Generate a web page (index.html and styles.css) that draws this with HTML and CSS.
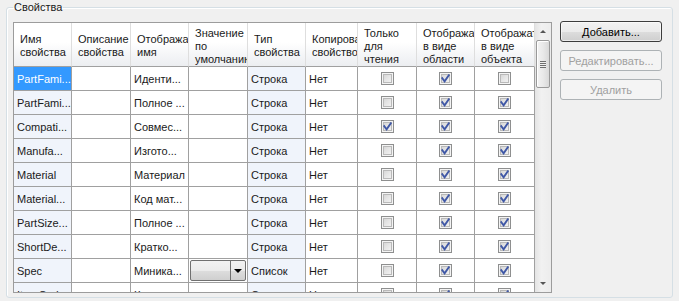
FILE: index.html
```html
<!DOCTYPE html>
<html lang="ru">
<head>
    <meta charset="UTF-8">
    <title>Свойства</title>
    <link rel="stylesheet" href="styles.css">
</head>
<body>
    <fieldset class="group">
        <legend>Свойства</legend>
        <div class="group-body">
            <div class="grid">
                <div class="grid-view">
                    <table class="props">
                        <colgroup>
                            <col style="width:58px">
                            <col style="width:59px">
                            <col style="width:58px">
                            <col style="width:59px">
                            <col style="width:58px">
                            <col style="width:52px">
                            <col style="width:59px">
                            <col style="width:58px">
                            <col style="width:60px">
                        </colgroup>
                        <thead>
                            <tr>
                                <th>Имя свойства</th>
                                <th>Описание свойства</th>
                                <th>Отображаемое имя</th>
                                <th>Значение по умолчанию</th>
                                <th>Тип свойства</th>
                                <th>Копировать свойство</th>
                                <th>Только для чтения</th>
                                <th>Отображать в виде области</th>
                                <th>Отображать в виде объекта</th>
                            </tr>
                        </thead>
                        <tbody>
                            <tr>
                                <td class="name sel">PartFami...</td>
                                <td></td>
                                <td>Иденти...</td>
                                <td></td>
                                <td class="type">Строка</td>
                                <td>Нет</td>
                                <td class="cb"><span class="chk"></span></td>
                                <td class="cb"><span class="chk on"><svg viewBox="0 0 11 11" width="11" height="11"><path d="M2.3 5.2 L4.6 8.3 L8.8 2.2" /></svg></span></td>
                                <td class="cb"><span class="chk"></span></td>
                            </tr>
                            <tr>
                                <td class="name">PartFami...</td>
                                <td></td>
                                <td>Полное ...</td>
                                <td></td>
                                <td class="type">Строка</td>
                                <td>Нет</td>
                                <td class="cb"><span class="chk"></span></td>
                                <td class="cb"><span class="chk on"><svg viewBox="0 0 11 11" width="11" height="11"><path d="M2.3 5.2 L4.6 8.3 L8.8 2.2" /></svg></span></td>
                                <td class="cb"><span class="chk on"><svg viewBox="0 0 11 11" width="11" height="11"><path d="M2.3 5.2 L4.6 8.3 L8.8 2.2" /></svg></span></td>
                            </tr>
                            <tr>
                                <td class="name">Compati...</td>
                                <td></td>
                                <td>Совмес...</td>
                                <td></td>
                                <td class="type">Строка</td>
                                <td>Нет</td>
                                <td class="cb"><span class="chk on"><svg viewBox="0 0 11 11" width="11" height="11"><path d="M2.3 5.2 L4.6 8.3 L8.8 2.2" /></svg></span></td>
                                <td class="cb"><span class="chk on"><svg viewBox="0 0 11 11" width="11" height="11"><path d="M2.3 5.2 L4.6 8.3 L8.8 2.2" /></svg></span></td>
                                <td class="cb"><span class="chk on"><svg viewBox="0 0 11 11" width="11" height="11"><path d="M2.3 5.2 L4.6 8.3 L8.8 2.2" /></svg></span></td>
                            </tr>
                            <tr>
                                <td class="name">Manufa...</td>
                                <td></td>
                                <td>Изгото...</td>
                                <td></td>
                                <td class="type">Строка</td>
                                <td>Нет</td>
                                <td class="cb"><span class="chk"></span></td>
                                <td class="cb"><span class="chk on"><svg viewBox="0 0 11 11" width="11" height="11"><path d="M2.3 5.2 L4.6 8.3 L8.8 2.2" /></svg></span></td>
                                <td class="cb"><span class="chk on"><svg viewBox="0 0 11 11" width="11" height="11"><path d="M2.3 5.2 L4.6 8.3 L8.8 2.2" /></svg></span></td>
                            </tr>
                            <tr>
                                <td class="name">Material</td>
                                <td></td>
                                <td>Материал</td>
                                <td></td>
                                <td class="type">Строка</td>
                                <td>Нет</td>
                                <td class="cb"><span class="chk"></span></td>
                                <td class="cb"><span class="chk on"><svg viewBox="0 0 11 11" width="11" height="11"><path d="M2.3 5.2 L4.6 8.3 L8.8 2.2" /></svg></span></td>
                                <td class="cb"><span class="chk on"><svg viewBox="0 0 11 11" width="11" height="11"><path d="M2.3 5.2 L4.6 8.3 L8.8 2.2" /></svg></span></td>
                            </tr>
                            <tr>
                                <td class="name">Material...</td>
                                <td></td>
                                <td>Код мат...</td>
                                <td></td>
                                <td class="type">Строка</td>
                                <td>Нет</td>
                                <td class="cb"><span class="chk"></span></td>
                                <td class="cb"><span class="chk on"><svg viewBox="0 0 11 11" width="11" height="11"><path d="M2.3 5.2 L4.6 8.3 L8.8 2.2" /></svg></span></td>
                                <td class="cb"><span class="chk on"><svg viewBox="0 0 11 11" width="11" height="11"><path d="M2.3 5.2 L4.6 8.3 L8.8 2.2" /></svg></span></td>
                            </tr>
                            <tr>
                                <td class="name">PartSize...</td>
                                <td></td>
                                <td>Полное ...</td>
                                <td></td>
                                <td class="type">Строка</td>
                                <td>Нет</td>
                                <td class="cb"><span class="chk"></span></td>
                                <td class="cb"><span class="chk on"><svg viewBox="0 0 11 11" width="11" height="11"><path d="M2.3 5.2 L4.6 8.3 L8.8 2.2" /></svg></span></td>
                                <td class="cb"><span class="chk on"><svg viewBox="0 0 11 11" width="11" height="11"><path d="M2.3 5.2 L4.6 8.3 L8.8 2.2" /></svg></span></td>
                            </tr>
                            <tr>
                                <td class="name">ShortDe...</td>
                                <td></td>
                                <td>Кратко...</td>
                                <td></td>
                                <td class="type">Строка</td>
                                <td>Нет</td>
                                <td class="cb"><span class="chk"></span></td>
                                <td class="cb"><span class="chk on"><svg viewBox="0 0 11 11" width="11" height="11"><path d="M2.3 5.2 L4.6 8.3 L8.8 2.2" /></svg></span></td>
                                <td class="cb"><span class="chk on"><svg viewBox="0 0 11 11" width="11" height="11"><path d="M2.3 5.2 L4.6 8.3 L8.8 2.2" /></svg></span></td>
                            </tr>
                            <tr>
                                <td class="name">Spec</td>
                                <td></td>
                                <td>Миника...</td>
                                <td class="combo-cell">
                                    <div class="combo">
                                        <span class="combo-text"></span>
                                        <span class="combo-btn"><span class="arr-down dark"></span></span>
                                    </div>
                                </td>
                                <td class="type">Список</td>
                                <td>Нет</td>
                                <td class="cb"><span class="chk"></span></td>
                                <td class="cb"><span class="chk on"><svg viewBox="0 0 11 11" width="11" height="11"><path d="M2.3 5.2 L4.6 8.3 L8.8 2.2" /></svg></span></td>
                                <td class="cb"><span class="chk on"><svg viewBox="0 0 11 11" width="11" height="11"><path d="M2.3 5.2 L4.6 8.3 L8.8 2.2" /></svg></span></td>
                            </tr>
                            <tr>
                                <td class="name">ItemCode</td>
                                <td></td>
                                <td>Код ...</td>
                                <td></td>
                                <td class="type">Строка</td>
                                <td>Нет</td>
                                <td class="cb"><span class="chk"></span></td>
                                <td class="cb"><span class="chk on"><svg viewBox="0 0 11 11" width="11" height="11"><path d="M2.3 5.2 L4.6 8.3 L8.8 2.2" /></svg></span></td>
                                <td class="cb"><span class="chk on"><svg viewBox="0 0 11 11" width="11" height="11"><path d="M2.3 5.2 L4.6 8.3 L8.8 2.2" /></svg></span></td>
                            </tr>
                        </tbody>
                    </table>
                </div>
                <div class="vscroll">
                    <div class="sb-btn"><span class="arr-up"></span></div>
                    <div class="sb-track">
                        <div class="sb-thumb"><span class="grip"></span></div>
                    </div>
                    <div class="sb-btn"><span class="arr-down"></span></div>
                </div>
            </div>

            <div class="actions">
                <button class="btn btn-default">Добавить...</button>
                <button class="btn" disabled>Редактировать...</button>
                <button class="btn" disabled>Удалить</button>
            </div>
        </div>
    </fieldset>
</body>
</html>
```

FILE: styles.css
```css
body {
    margin: 0;
    padding: 0;
    background: #f0f0f0;
    font-family: "Liberation Sans", Arial, sans-serif;
    font-size: 11px;
    color: #000;
}

/* Group box */
.group {
    margin: 0 6px;
    padding: 8px 10px 4px 6px;
    border: 1px solid #d5dfe5;
    border-radius: 3px;
    box-shadow: inset 1px 1px 0 #fff;
    min-width: 0;
}

.group legend {
    padding: 0 1px;
    line-height: 14px;
    color: #1a1a1a;
}

.group-body {
    display: flex;
    gap: 8px;
}

/* Data grid */
.grid {
    display: flex;
    width: 539px;
    height: 271px;
    box-sizing: border-box;
    border: 1px solid #9c9c9c;
    background: #fff;
    overflow: hidden;
}

.grid-view {
    width: 521px;
    overflow: hidden;
}

.props {
    width: 521px;
    table-layout: fixed;
    border-collapse: separate;
    border-spacing: 0;
}

.props th {
    height: 44px;
    box-sizing: border-box;
    padding: 3px 1px 0 6px;
    border-right: 1px solid #dedede;
    border-bottom: 1px solid #a0a0a0;
    background: linear-gradient(#ffffff 0%, #ffffff 45%, #f4f5f7 75%, #eceef1 100%);
    font-weight: normal;
    text-align: left;
    vertical-align: middle;
    line-height: 13px;
    overflow: hidden;
    color: #1a1a1a;
}

.props td {
    height: 24px;
    box-sizing: border-box;
    padding: 0 0 0 3px;
    border-right: 1px solid #a0a0a0;
    border-bottom: 1px solid #a0a0a0;
    white-space: nowrap;
    overflow: hidden;
    vertical-align: middle;
    line-height: 14px;
    color: #1a1a1a;
}

.props td.name,
.props td.type {
    background: #f0f4fb;
}

.props td.sel {
    background: #3399ff;
    color: #fff;
}

.props td.cb {
    padding: 0;
    text-align: center;
    line-height: 0;
}

/* Check boxes */
.chk {
    display: inline-block;
    width: 13px;
    height: 13px;
    box-sizing: border-box;
    border: 1px solid #8e8f8f;
    background: linear-gradient(135deg, #cfcfcf 0%, #e6e6e6 50%, #f7f7f7 100%);
    box-shadow: inset 0 0 0 1px #f4f4f4, inset 0 0 0 2px #b9b9b9;
    vertical-align: middle;
}

.chk svg {
    display: block;
}

.chk svg path {
    fill: none;
    stroke: #4058a6;
    stroke-width: 1.9;
    stroke-linecap: square;
}

/* Combo box inside a cell */
.props td.combo-cell {
    padding: 1px;
}

.combo {
    display: flex;
    height: 21px;
    box-sizing: border-box;
    border: 1px solid #707070;
    border-radius: 2px;
    background: linear-gradient(#f2f2f2 0%, #ebebeb 50%, #dddddd 51%, #cfcfcf 100%);
}

.combo-text {
    flex: 1;
    border-right: 1px solid #707070;
}

.combo-btn {
    width: 14px;
    display: flex;
    align-items: center;
    justify-content: center;
}

/* Arrows */
.arr-up,
.arr-down {
    display: block;
    width: 0;
    height: 0;
    border-left: 3px solid transparent;
    border-right: 3px solid transparent;
}

.arr-up {
    border-bottom: 3px solid #555;
}

.arr-down {
    border-top: 3px solid #555;
}

.arr-down.dark {
    border-left-width: 4px;
    border-right-width: 4px;
    border-top: 4px solid #000;
}

/* Vertical scrollbar */
.vscroll {
    width: 16px;
    display: flex;
    flex-direction: column;
    background: linear-gradient(90deg, #e4e4e4, #f1f1f1 40%, #ececec);
}

.sb-btn {
    height: 17px;
    display: flex;
    align-items: center;
    justify-content: center;
}

.sb-track {
    flex: 1;
}

.sb-thumb {
    margin: 0 1px 0 1px;
    height: 48px;
    box-sizing: border-box;
    border: 1px solid #999;
    border-radius: 2px;
    background: linear-gradient(90deg, #f3f3f3, #e9e9e9 50%, #d9d9d9);
    box-shadow: inset 1px 1px 0 #fff;
    display: flex;
    align-items: center;
    justify-content: center;
}

.grip {
    width: 6px;
    height: 7px;
    background: repeating-linear-gradient(#6f6f6f 0, #6f6f6f 1px, #f0f0f0 1px, #f0f0f0 2px);
}

/* Buttons */
.actions {
    display: flex;
    flex-direction: column;
    gap: 8px;
    margin-top: -1px;
}

.btn {
    width: 102px;
    height: 21px;
    padding: 0;
    font-family: "Liberation Sans", Arial, sans-serif;
    font-size: 11px;
    color: #000;
    border: 1px solid #707070;
    border-radius: 3px;
    background: linear-gradient(#f2f2f2 0%, #ebebeb 50%, #dddddd 51%, #cfcfcf 100%);
    box-shadow: inset 0 0 0 1px rgba(255, 255, 255, 0.6);
}

.btn-default {
    border-color: #3d3d3d;
}

.btn:disabled {
    color: #a0a0a0;
    border-color: #adb2b5;
    background: #f4f4f4;
    box-shadow: none;
}
```
